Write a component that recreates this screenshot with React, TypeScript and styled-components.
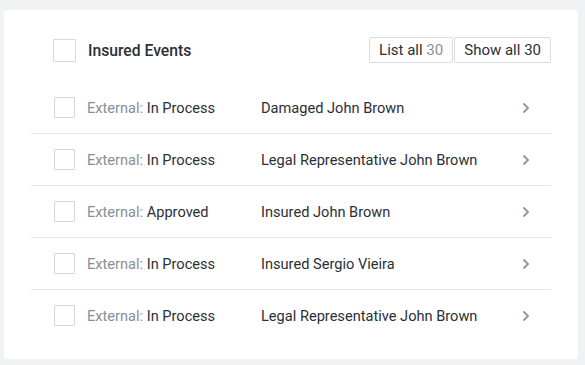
import React from "react";
import styled, { createGlobalStyle } from "styled-components";

const GlobalStyle = createGlobalStyle`
  html, body {
    margin: 0;
    padding: 0;
    background: #f1f2f4;
    font-family: Roboto, "Liberation Sans", Arial, sans-serif;
  }
`;

const Page = styled.div`
  padding: 10px 7px 7px 4px;
`;

const Card = styled.div`
  background: #ffffff;
  border-radius: 4px;
  padding: 27px 27px 18px;
`;

const Header = styled.div`
  display: flex;
  align-items: center;
  height: 26px;
  padding-left: 22px;
  margin-bottom: 19px;
`;

const Checkbox = styled.span<{ $size: number; $border: string }>`
  display: inline-block;
  box-sizing: border-box;
  width: ${(p) => p.$size}px;
  height: ${(p) => p.$size}px;
  border: 1px solid ${(p) => p.$border};
  border-radius: 1px;
  flex-shrink: 0;
`;

const Title = styled.div`
  margin-left: 12px;
  font-size: 15.7px;
  font-weight: 500;
  color: #2b2f36;
  flex: 1;
`;

const ButtonGroup = styled.div`
  display: flex;
  gap: 1px;
`;

const HeaderButton = styled.button`
  height: 26px;
  box-sizing: border-box;
  padding: 0 9px;
  background: #fff;
  border: 1px solid #dcdcdc;
  border-radius: 2px;
  font-family: inherit;
  font-size: 15px;
  color: #2b2f36;
  cursor: pointer;
`;

const Count = styled.span<{ $muted?: boolean }>`
  color: ${(p) => (p.$muted ? "#8a8f96" : "inherit")};
`;

const Row = styled.div`
  display: flex;
  align-items: center;
  height: 51px;
  padding-left: 23px;
  border-bottom: 1px solid #e3e6ea;
  font-size: 14.6px;
  color: #2b2f36;

  &:last-child {
    border-bottom: none;
  }
`;

const Status = styled.div`
  margin-left: 12px;
  width: 174px;
`;

const Muted = styled.span`
  color: #8a8f96;
`;

const Name = styled.div`
  flex: 1;
`;

const Chevron = styled.svg`
  margin-right: 21px;
  flex-shrink: 0;
`;

const rows = [
  { status: "In Process", name: "Damaged John Brown" },
  { status: "In Process", name: "Legal Representative John Brown" },
  { status: "Approved", name: "Insured John Brown" },
  { status: "In Process", name: "Insured Sergio Vieira" },
  { status: "In Process", name: "Legal Representative John Brown" },
];

export default function App() {
  return (
    <>
      <GlobalStyle />
      <Page>
        <Card>
          <Header>
            <Checkbox $size={23} $border="#d9d9d9" />
            <Title>Insured Events</Title>
            <ButtonGroup>
              <HeaderButton>
                List all <Count $muted>30</Count>
              </HeaderButton>
              <HeaderButton>
                Show all <Count>30</Count>
              </HeaderButton>
            </ButtonGroup>
          </Header>
          {rows.map((r, i) => (
            <Row key={i}>
              <Checkbox $size={21} $border="#cfd8dc" />
              <Status>
                <Muted>External:</Muted> {r.status}
              </Status>
              <Name>{r.name}</Name>
              <Chevron width="8" height="12" viewBox="0 0 8 12">
                <path d="M1.5 1.5 L6 6 L1.5 10.5" fill="none" stroke="#8f9399" strokeWidth="1.8" />
              </Chevron>
            </Row>
          ))}
        </Card>
      </Page>
    </>
  );
}
